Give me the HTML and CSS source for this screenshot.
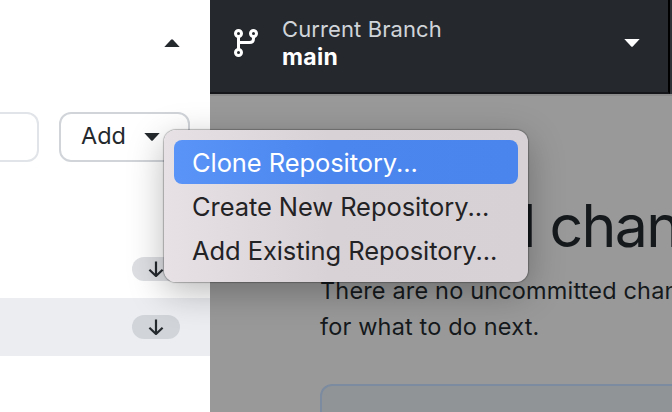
FILE: index.html
```html
<!DOCTYPE html>
<html lang="en">
<head>
<meta charset="utf-8">
<title>GitHub Desktop</title>
<link rel="stylesheet" href="styles.css">
</head>
<body>
<div class="app">
  <aside class="sidebar">
    <header class="sidebar-header">
      <svg class="caret" viewBox="0 0 16 8"><path d="M.3 8 7 .8Q8-.2 9 .8L15.7 8Z"/></svg>
    </header>
    <div class="filter-row">
      <div class="filter"></div>
      <button class="add"><span>Add</span><svg class="caret" viewBox="0 0 16 8"><path d="M.3 0 7 7.2Q8 8.2 9 7.2L15.7 0Z"/></svg></button>
    </div>
    <div class="repo"><span class="pill"><svg viewBox="0 0 16 16"><path d="M8 .5v14M1.4 8.7 8 15l6.6-6.3"/></svg></span></div>
    <div class="repo selected"><span class="pill"><svg viewBox="0 0 16 16"><path d="M8 .5v14M1.4 8.7 8 15l6.6-6.3"/></svg></span></div>
  </aside>
  <main class="main">
    <div class="toolbar">
      <div class="branch">
        <svg class="branch-icon" viewBox="0 0 24 28"><circle cx="4.5" cy="4.5" r="3"/><circle cx="19.5" cy="4.5" r="3"/><circle cx="4.5" cy="23.5" r="3"/><path d="M4.5 8v12M19.5 8v1.5q0 4-4 4H4.5"/></svg>
        <div class="branch-text"><div class="label">Current Branch</div><div class="name">main</div></div>
        <svg class="caret light" viewBox="0 0 16 8"><path d="M.3 0 7 7.2Q8 8.2 9 7.2L15.7 0Z"/></svg>
      </div>
    </div>
    <section class="content">
      <h1>No local changes</h1>
      <p>There are no uncommitted changes<br>for what to do next.</p>
      <div class="card"></div>
    </section>
  </main>
  <div class="menu">
    <div class="item active">Clone Repository...</div>
    <div class="item">Create New Repository...</div>
    <div class="item">Add Existing Repository...</div>
  </div>
</div>
</body>
</html>
```
FILE: styles.css
```css
* { box-sizing: border-box; }
body { margin: 0; font-family: Inter, "Liberation Sans", sans-serif; color: #24292e; }
.app { position: relative; display: flex; width: 672px; height: 412px; overflow: hidden; }
.sidebar { width: 210px; flex: none; background: #fff; }
.sidebar-header { height: 112px; padding: 39px 30px 0 0; display: flex; justify-content: flex-end; }
.caret { width: 16px; height: 8px; flex: none; fill: #24292e; display: block; }
.caret.light { fill: #fff; }
.filter-row { display: flex; gap: 20px; height: 128px; align-items: flex-start; }
.filter { width: 39px; height: 50px; border: 2px solid #e1e4e8; border-left: 0; border-radius: 0 12px 12px 0; }
.add { width: 131px; height: 50px; padding: 0 28px 3px 20px; display: flex; align-items: center; justify-content: space-between; background: #fff; border: 2px solid #d1d5da; border-radius: 12px; font: 23.5px Inter, sans-serif; letter-spacing: 0; color: #24292e; }
.add .caret { margin-top: 3px; }
.repo { height: 58px; padding-right: 30px; display: flex; align-items: center; justify-content: flex-end; }
.selected { background: #ebedf1; }
.pill { width: 48px; height: 24px; border-radius: 12px; background: #d1d5da; display: flex; align-items: center; justify-content: center; }
.repo:not(.selected) .pill { background: #dddfe3; }
.pill svg { width: 16px; height: 16px; fill: none; stroke: #24292e; stroke-width: 2.2; }
.main { width: 462px; flex: none; background: #999; }
.toolbar { height: 96px; background: #2f3236; border-bottom: 2px solid #8c8c8c; display: flex; }
.branch { width: 460px; height: 94px; background: #25292e; border-right: 2px solid #000; border-bottom: 2px solid #141619; display: flex; padding-right: 28px; }
.branch-icon { width: 24px; height: 28px; margin: 29px 0 0 24px; fill: none; stroke: #fff; stroke-width: 3; }
.branch-text { flex: 1; margin: 16px 0 0 24px; line-height: 27px; font-size: 22px; }
.label { color: #d1d5da; letter-spacing: 0.1px; }
.name { padding-top: 1px; color: #fff; font-weight: 700; font-size: 23px; letter-spacing: 0.3px; }
.branch .caret { margin-top: 39px; }
.content { padding: 94px 0 0 110px; white-space: nowrap; color: #15191c; }
h1 { margin: 0; font-weight: 400; font-size: 59px; line-height: 72px; letter-spacing: -1.65px; }
p { margin: 11px 0 0; font-size: 23.5px; line-height: 36px; letter-spacing: 0.16px; }
.card { margin-top: 39px; width: 500px; height: 120px; background: #909496; border: 2px solid #7c8ba0; border-radius: 12px; }
.menu { position: absolute; left: 164px; top: 130px; width: 364px; height: 152px; padding: 10px; border-radius: 12px; background: linear-gradient(90deg, #e7e1e6, #d8d2d7 45%, #d7d1d6); box-shadow: 0 0 1px 1px rgba(0,0,0,.25), 0 10px 36px rgba(0,0,0,.28); font-size: 25.5px; letter-spacing: -0.08px; color: #232224; white-space: nowrap; }
.item { height: 44px; line-height: 45px; padding-left: 18px; border-radius: 8px; }
.active { color: #fff; background: linear-gradient(90deg, #5a94f8, #4a86ee 45%, #4985ed); }
```
